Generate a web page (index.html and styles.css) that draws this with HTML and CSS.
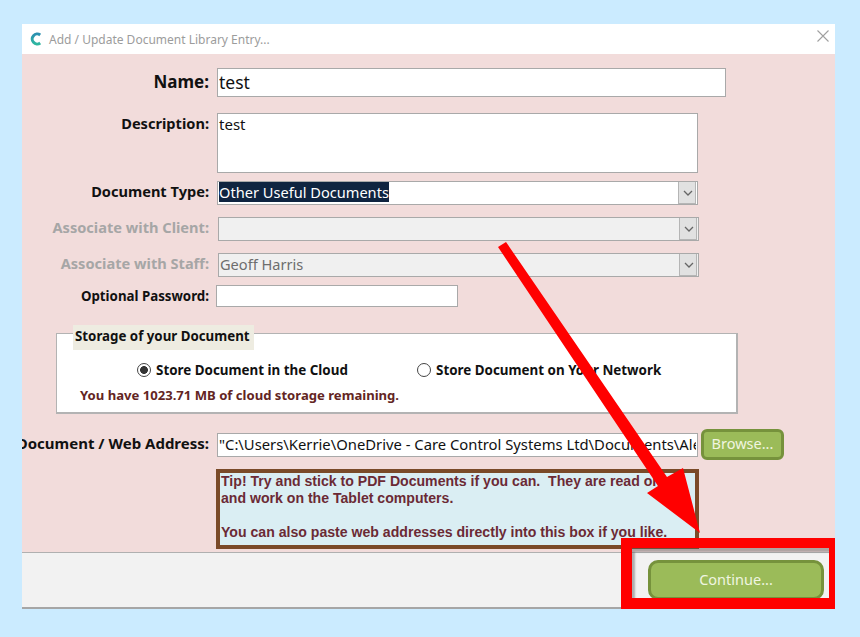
FILE: index.html
```html
<!DOCTYPE html>
<html lang="en">
<head>
  <meta charset="UTF-8">
  <meta name="viewport" content="width=device-width, initial-scale=1.0">
  <title>Add / Update Document Library Entry</title>
  <link rel="stylesheet" href="styles.css">
</head>
<body>
  <div class="window">
    <div class="titlebar">
      <svg class="app-icon" width="14" height="14" viewBox="0 0 14 14">
        <defs>
          <linearGradient id="iconGrad" x1="0" y1="0" x2="0" y2="1">
            <stop offset="0" stop-color="#2a8fb0"/>
            <stop offset="1" stop-color="#2fb7a0"/>
          </linearGradient>
        </defs>
        <path d="M11.2 3 A5 5 0 1 0 11.2 11" fill="none" stroke="url(#iconGrad)" stroke-width="3"/>
      </svg>
      <span class="title-text">Add / Update Document Library Entry...</span>
      <svg class="close-icon" width="12" height="12" viewBox="0 0 12 12">
        <path d="M0.5 0.5 L11.5 11.5 M11.5 0.5 L0.5 11.5" stroke="#a0a0a0" stroke-width="1.1" fill="none"/>
      </svg>
    </div>

    <div class="content">
      <div class="row row-name">
        <label class="label label-big">Name:</label>
        <input class="field field-name" type="text" value="test" readonly>
      </div>
      <div class="row row-desc">
        <label class="label">Description:</label>
        <textarea class="field field-desc" readonly>test</textarea>
      </div>
      <div class="row row-type">
        <label class="label">Document Type:</label>
        <div class="field combo">
          <span class="combo-text"><span class="selected">Other Useful Documents</span></span>
          <span class="combo-btn"><svg width="10" height="6" viewBox="0 0 10 6"><path d="M1 1 L5 5 L9 1" fill="none" stroke="#666" stroke-width="1.3"/></svg></span>
        </div>
      </div>
      <div class="row row-client">
        <label class="label label-off">Associate with Client:</label>
        <div class="field combo combo-off">
          <span class="combo-text"></span>
          <span class="combo-btn"><svg width="10" height="6" viewBox="0 0 10 6"><path d="M1 1 L5 5 L9 1" fill="none" stroke="#666" stroke-width="1.3"/></svg></span>
        </div>
      </div>
      <div class="row row-staff">
        <label class="label label-off">Associate with Staff:</label>
        <div class="field combo combo-off">
          <span class="combo-text">Geoff Harris</span>
          <span class="combo-btn"><svg width="10" height="6" viewBox="0 0 10 6"><path d="M1 1 L5 5 L9 1" fill="none" stroke="#666" stroke-width="1.3"/></svg></span>
        </div>
      </div>
      <div class="row row-pass">
        <label class="label label-pass">Optional Password:</label>
        <input class="field field-pass" type="text" readonly>
      </div>

      <div class="storage">
        <div class="storage-title">Storage of your Document</div>
        <div class="radio-row">
          <span class="radio-option radio-cloud"><span class="radio radio-on"></span>Store Document in the Cloud</span>
          <span class="radio-option radio-network"><span class="radio"></span>Store Document on Your Network</span>
        </div>
        <div class="storage-note">You have 1023.71 MB of cloud storage remaining.</div>
      </div>

      <div class="row row-address">
        <label class="label label-address">Document / Web Address:</label>
        <input class="field field-address" type="text" value="&quot;C:\Users\Kerrie\OneDrive - Care Control Systems Ltd\Documents\Alexander House.pdf&quot;" readonly>
        <button class="green-btn browse-btn" type="button">Browse...</button>
      </div>

      <div class="tip">Tip! Try and stick to PDF Documents if you can.  They are read on
and work on the Tablet computers.

You can also paste web addresses directly into this box if you like.</div>
    </div>

    <div class="footer">
      <button class="green-btn continue-btn" type="button">Continue...</button>
    </div>
  </div>

  <!-- annotations drawn over the screenshot -->
  <div class="red-box"></div>
  <svg class="arrow" width="860" height="637" viewBox="0 0 860 637">
    <polygon points="498,247 506,242 667,477 683,468 700,533 647,493 658,486" fill="#ff0000"/>
  </svg>
</body>
</html>
```

FILE: styles.css
```css
html, body {
  margin: 0;
  height: 100%;
}
body {
  background-color: #cbebff;
  padding: 24px 25px 0 22px;
  box-sizing: border-box;
  overflow: hidden;
  font-family: "Noto Sans", sans-serif;
}
.window {
  width: 813px;
  height: 585px;
  display: flex;
  flex-direction: column;
  background-color: #f2dcdb;
}
.titlebar {
  height: 30px;
  background-color: #fff;
  display: flex;
  align-items: center;
  padding: 0 6px 0 7px;
  flex-shrink: 0;
}
.app-icon {
  margin-right: 6px;
  margin-top: -1px;
}
.title-text {
  font-size: 12px;
  color: #9c9c9c;
  flex: 1;
}
.close-icon {
  margin-top: -6px;
}

.content {
  flex: 1;
  overflow: hidden;
  min-height: 0;
}
.row {
  display: flex;
  align-items: flex-start;
}
.label {
  width: 187px;
  margin-right: 8px;
  flex-shrink: 0;
  display: flex;
  justify-content: flex-end;
  white-space: nowrap;
  font-size: 14.6px;
  font-weight: 700;
  color: #111;
  line-height: 20px;
}
.label-big {
  font-size: 17px;
  line-height: 27px;
}
.label-off {
  color: #a6a6a6;
}
.label-pass {
  font-size: 13.3px;
  padding-top: 1px;
}
.label-address {
  font-size: 15px;
  margin-bottom: 3px;
}
.field {
  box-sizing: border-box;
  border: 1px solid #a9a9a9;
  background-color: #fff;
  font-family: "Noto Sans", sans-serif;
  font-size: 14.6px;
  color: #111;
  padding: 0 1px;
  margin: 0;
  outline: none;
  border-radius: 0;
}

.row-name { margin-top: 14px; height: 29px; }
.row-desc { margin-top: 16px; height: 60px; }
.row-type { margin-top: 8px; }
.row-client { margin-top: 12px; }
.row-staff { margin-top: 12px; }
.row-pass { margin-top: 8px; }
.row-address { margin-top: 15px; align-items: center; }

.field-name {
  width: 509px;
  height: 29px;
  padding-bottom: 2px;
  font-size: 17.5px;
}
.field-desc {
  width: 481px;
  height: 60px;
  resize: none;
  overflow: hidden;
  display: block;
  font-size: 15px;
  line-height: 20px;
}
.combo {
  width: 481px;
  height: 24px;
  display: flex;
}
.combo-text {
  flex: 1;
  line-height: 20px;
}
.selected {
  display: inline-block;
  background-color: #0f2440;
  color: #fff;
}
.combo-btn {
  width: 17px;
  background-color: #e1e1e1;
  border-left: 1px solid #b5b5b5;
  box-shadow: inset -1px -1px 0 #b5b5b5;
  display: flex;
  align-items: center;
  justify-content: center;
}
.combo-off {
  margin-left: 1px;
  background-color: #f0f0f0;
  color: #6d6d6d;
}
.field-pass {
  width: 242px;
  height: 22px;
  margin-left: -1px;
}
.field-address {
  width: 481px;
  height: 24px;
  font-size: 14.8px;
  padding-bottom: 2px;
}

.storage {
  box-sizing: border-box;
  width: 682px;
  height: 81px;
  margin: 26px 0 0 34px;
  background-color: #fff;
  border: 1px solid #b3b3b3;
  border-right-width: 2px;
  border-bottom-width: 2px;
}
.storage-title {
  height: 25px;
  margin: -9px 0 0 16px;
  padding: 0 2px;
  width: 181px;
  box-sizing: border-box;
  background-color: #eeece1;
  font-size: 13.3px;
  font-weight: 700;
  line-height: 23px;
  color: #111;
  white-space: nowrap;
}
.radio-row {
  display: flex;
  margin-top: 10px;
  height: 20px;
  align-items: center;
  font-size: 13.4px;
  font-weight: 700;
  color: #111;
}
.radio-option {
  display: flex;
  align-items: center;
  white-space: nowrap;
}
.radio-cloud {
  margin-left: 80px;
  width: 280px;
}
.radio {
  box-sizing: border-box;
  width: 14px;
  height: 14px;
  border-radius: 50%;
  border: 1px solid #444;
  background-color: #fff;
  margin-right: 5px;
  display: inline-block;
}
.radio-on {
  background: radial-gradient(circle, #333 0 3.6px, #fff 4.2px);
}
.storage-note {
  margin: 5px 0 0 23px;
  font-size: 13.1px;
  font-weight: 700;
  line-height: 20px;
  color: #632523;
}

.green-btn {
  box-sizing: border-box;
  background-color: #9bbb59;
  border: 3px solid #76923c;
  border-radius: 6px;
  color: #f0f5e0;
  font-family: "Noto Sans", sans-serif;
  font-size: 14.5px;
  padding: 0 0 3px;
}
.browse-btn {
  width: 83px;
  height: 31px;
  margin-left: 3px;
}
.tip {
  box-sizing: border-box;
  width: 483px;
  height: 80px;
  margin: 9px 0 0 194px;
  padding: 0 0 0 1px;
  background-color: #daeef3;
  border: 4px solid #7a4a28;
  font-family: "Liberation Sans", Arial, sans-serif;
  font-size: 14.1px;
  font-weight: 700;
  line-height: 17px;
  color: #6b2a35;
  white-space: pre-wrap;
  overflow: hidden;
}

.footer {
  box-sizing: border-box;
  height: 57px;
  flex-shrink: 0;
  background-color: #f2f2f2;
  border-top: 1px solid #b0b0b0;
  border-bottom: 2px solid #a6a6a6;
  display: flex;
  justify-content: flex-end;
  align-items: flex-start;
  padding: 7px 11px 0 0;
}
.continue-btn {
  width: 176px;
  height: 40px;
  border-radius: 10px;
}

/* annotations */
.red-box {
  position: absolute;
  left: 621px;
  top: 538px;
  width: 214px;
  height: 71px;
  box-sizing: border-box;
  border-style: solid;
  border-color: #ff0000;
  border-width: 10px 6px 11px 11px;
  box-shadow: inset 3px 4px 2px rgba(90, 90, 90, 0.45);
}
.arrow {
  position: absolute;
  left: 0;
  top: 0;
}
```
